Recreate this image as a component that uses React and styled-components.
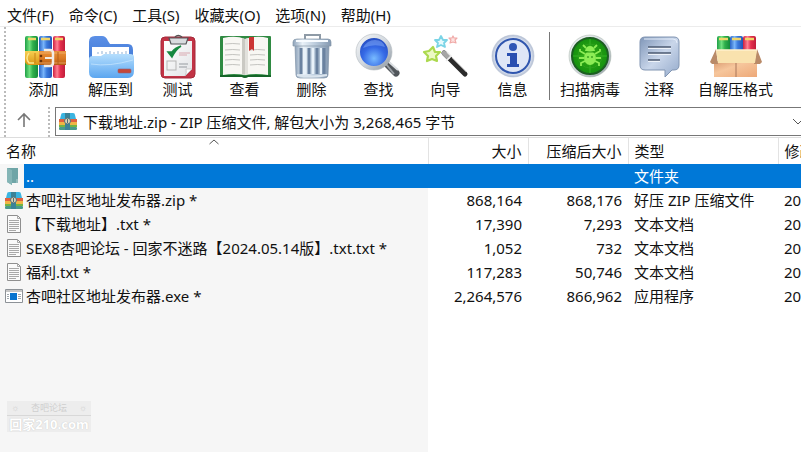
import React, { useState } from 'react'
import styled, { createGlobalStyle, css } from 'styled-components'

const GlobalStyle = createGlobalStyle`
  * {
    box-sizing: border-box;
  }

  body {
    margin: 0;
    background: #fff;
    color: #111;
    overflow: hidden;
  }

  body, button, select {
    font-family: 'Noto Sans', 'Noto Sans CJK SC', sans-serif;
    font-size: 15px;
    line-height: 20px;
  }
`

const Defs = () => (
  <defs>
    <linearGradient id="green"><stop offset="0" stopColor="#1fa046" /><stop offset=".35" stopColor="#6fe07f" /><stop offset=".6" stopColor="#2fb04c" /><stop offset="1" stopColor="#128a3a" /></linearGradient>
    <linearGradient id="blue"><stop offset="0" stopColor="#2a63c4" /><stop offset=".35" stopColor="#78b4fa" /><stop offset=".6" stopColor="#3a79dc" /><stop offset="1" stopColor="#2355b8" /></linearGradient>
    <linearGradient id="red"><stop offset="0" stopColor="#cf2040" /><stop offset=".35" stopColor="#ff7f92" /><stop offset=".6" stopColor="#e5304e" /><stop offset="1" stopColor="#c01c3a" /></linearGradient>
    <linearGradient id="belt" x2="0" y2="1"><stop offset="0" stopColor="#e8923a" /><stop offset=".5" stopColor="#dd7c26" /><stop offset="1" stopColor="#b55a12" /></linearGradient>
    <linearGradient id="gold" x2="0" y2="1"><stop offset="0" stopColor="#f7cf52" /><stop offset="1" stopColor="#d99514" /></linearGradient>
    <linearGradient id="folderBack" x2="0" y2="1"><stop offset="0" stopColor="#5b8fe6" /><stop offset="1" stopColor="#3a74d2" /></linearGradient>
    <linearGradient id="folderFront" x2="0" y2="1"><stop offset="0" stopColor="#b5defd" /><stop offset="1" stopColor="#5ba6f0" /></linearGradient>
    <linearGradient id="steel"><stop offset="0" stopColor="#8ea3ba" /><stop offset=".25" stopColor="#e9f1f8" /><stop offset=".6" stopColor="#b9cadb" /><stop offset="1" stopColor="#8398b0" /></linearGradient>
    <linearGradient id="paper" x2="1" y2="1"><stop offset="0" stopColor="#fff" /><stop offset="1" stopColor="#e2e4e6" /></linearGradient>
    <radialGradient id="lens" cx=".5" cy=".7" r=".7"><stop offset="0" stopColor="#78bbff" /><stop offset=".5" stopColor="#3569e6" /><stop offset="1" stopColor="#2348ba" /></radialGradient>
    <linearGradient id="rim" x2="1" y2="1"><stop offset="0" stopColor="#f2f4f6" /><stop offset=".5" stopColor="#d2d8de" /><stop offset="1" stopColor="#949da6" /></linearGradient>
    <radialGradient id="infoRim"><stop offset=".8" stopColor="#e9effb" /><stop offset="1" stopColor="#b3bed2" /></radialGradient>
    <radialGradient id="bugGreen"><stop offset="0" stopColor="#35ad12" /><stop offset="1" stopColor="#149010" /></radialGradient>
    <linearGradient id="bubble" x2="1" y2="1"><stop offset="0" stopColor="#7f96b8" /><stop offset=".5" stopColor="#c9d6ea" /><stop offset="1" stopColor="#93a9ca" /></linearGradient>
    <linearGradient id="carton" x2="1" y2="1"><stop offset="0" stopColor="#d99a70" /><stop offset=".4" stopColor="#f6c69c" /><stop offset="1" stopColor="#eda878" /></linearGradient>
  </defs>
)

const AddIcon = () => (
  <>
    <rect x="8" y="3" width="13" height="42" rx="2" fill="url(#green)" />
    <rect x="22" y="3" width="13" height="42" rx="2" fill="url(#blue)" />
    <rect x="36" y="3" width="12" height="42" rx="2" fill="url(#red)" />
    <path d="M11 6h8M24 6h9M38 6h8" stroke="#f0d66a" strokeWidth="2.5" />
    <path d="M8 18h16v14H12q-3 0-4-3z" fill="url(#gold)" />
    <path d="M12 20q-4 5 0 10h5" stroke="#fbe68c" strokeWidth="1.5" fill="none" />
    <path d="M18 20v10" stroke="#c98314" />
    <rect x="22" y="18" width="27" height="14" fill="url(#belt)" />
    <path d="M22 20h27M22 30h27" stroke="#f5b878" strokeWidth=".7" />
    <path d="M27 17h6q3 0 3 3v10q0 3-3 3h-6" fill="none" stroke="#f1ece6" strokeWidth="2.5" />
    <path d="M28 25h8" stroke="#f1ece6" strokeWidth="2" />
    <circle cx="24" cy="23" r="1.300" fill="#6b3208" />
    <circle cx="24" cy="28" r="1.300" fill="#6b3208" />
    <path d="M41 19v12" stroke="#b5601b" />
  </>
)

const ExtractIcon = () => (
  <>
    <path d="M5 9q0-6 6-6h7q4 0 6 5l2 3h18q5 0 5 6v18H5z" fill="url(#folderBack)" />
    <path d="M8 14h37v14H8z" fill="#fff" />
    <path d="M14 21v-2M18 21v-3M22 21v-2M26 21v-3M30 21v-2M34 21v-3M38 21v-2M42 21v-3" stroke="#8fb1d6" />
    <path d="M5 26q0-3 4-3h8l3-2h26q4 0 4 3v14q0 7-6 7H11q-6 0-6-6z" fill="url(#folderFront)" />
    <path d="M7 31q18 3 42-4" stroke="#d3edff" strokeWidth="1" fill="none" opacity=".6" />
    <rect x="34" y="36" width="13" height="4" rx="1" fill="#c4473a" stroke="#8e6277" strokeWidth=".6" />
  </>
)

const TestIcon = () => (
  <>
    <rect x="10" y="4" width="34" height="41" rx="4" fill="#c23345" stroke="#a52a3a" />
    <path d="M13 8h28v28l-7 7H13z" fill="url(#paper)" />
    <path d="M41 36l-7 7q2-3 1-7z" fill="#fff" stroke="#bbb" strokeWidth=".7" />
    <path d="M18 5h19l-2 6H20z" fill="#d9dcdf" stroke="#54565a" strokeWidth="1.200" />
    <path d="M24 4q3-3 7 0" fill="none" stroke="#555" strokeWidth="1.500" />
    <rect x="16" y="28" width="9" height="9" fill="none" stroke="#b5b5b5" />
    <path d="M17 19l4 5q4-8 9-11-6 2-9 6z" fill="#168940" stroke="#168940" strokeWidth="1.500" />
    <path d="M28 20h11M28 22h8" stroke="#d9a9b0" />
    <path d="M28 31h9M28 34h8" stroke="#969ba0" />
  </>
)

const ViewIcon = () => (
  <>
    <rect x="2" y="3" width="51" height="41" rx="1" fill="#2f8a42" />
    <path d="M5 5q13-3 22 1v36q-11-2-22 0z" fill="#f8f7f3" />
    <path d="M27 6q12-4 23-1v37q-12-2-23 0z" fill="#f8f7f3" />
    <path d="M24 5l3 1v36l-3-1z" fill="#cac9c3" />
    <path d="M27 6l3-1v36l-3 1z" fill="#e2e1dc" />
    <path d="M7 11q8-1 15 0M7 17q8-1 15 0M7 22q8-1 15 0M7 27q8-1 15 0M7 32q8-1 15 0M32 17q8-1 15 0M32 22q8-1 15 0M32 27q8-1 15 0M32 32q8-1 15 0" stroke="#c4c4c0" fill="none" />
    <path d="M31 4h5v14l-2-2-3 2z" fill="#cb3534" />
    <path d="M2 43h22q3 2 6 0h23" stroke="#156528" strokeWidth="2" fill="none" />
  </>
)

const DeleteIcon = () => (
  <>
    <path d="M20 7V2h15v5" fill="none" stroke="#8e9aa6" strokeWidth="2" />
    <path d="M10 12h34l-1 30q0 3-4 3H15q-4 0-4-3z" fill="url(#steel)" stroke="#7f92a6" strokeWidth=".7" />
    <path d="M16 15v26M24 15v26M32 15v26M39 15v26" stroke="#6a82a0" strokeWidth="3" />
    <path d="M20 15v26M28 15v26M36 15v26" stroke="#e8f2fa" strokeWidth="2" />
    <path d="M8 9q0-3 4-3h31q3 0 3 3v4H8z" fill="url(#steel)" stroke="#8799ab" strokeWidth=".7" />
    <path d="M11 8h32" stroke="#f7fbff" strokeWidth="2" />
    <path d="M12 42q15 3 30 0" fill="none" stroke="#dbe5ee" strokeWidth="2" />
  </>
)

const FindIcon = () => (
  <>
    <path d="M35 31l9 9" stroke="#51565b" strokeWidth="7" strokeLinecap="round" />
    <path d="M34 31l8 10" stroke="#999fa5" strokeWidth="2" />
    <path d="M37 29l9 8" stroke="#dde1e4" strokeWidth="2" />
    <circle cx="22" cy="19" r="16" fill="url(#lens)" />
    <circle cx="22" cy="19" r="16" fill="none" stroke="url(#rim)" strokeWidth="4" />
    <circle cx="22" cy="19" r="18" fill="none" stroke="#b4bac0" strokeWidth=".6" />
    <path d="M11 15q4-8 12-8t10 7q-11-4-22 1z" fill="#8eb6ff" opacity=".45" />
  </>
)

const WizardIcon = () => (
  <>
    <path d="M25 20l21 21" stroke="#2b2b2b" strokeWidth="5" strokeLinecap="round" />
    <path d="M25 20l4 4" stroke="#a5a5a5" strokeWidth="5" strokeLinecap="round" />
    <path d="M28 19l4 4-5 5" stroke="#ededed" strokeWidth="1.500" fill="none" />
    <path d="M33 25l14 14" stroke="#8d8d8d" strokeWidth="1" />
    <path d="M22 3l2 4 4 0-3 3 1 4-4-2-4 2 1-4-3-3 4 0z" fill="#e5fafd" stroke="#7bd4e6" strokeWidth="1.800" strokeLinejoin="round" />
    <path d="M34 3l1 2 3 0-2 2 1 3-3-1-3 1 1-3-2-2 3 0z" fill="#fde3e1" stroke="#f0aaa8" strokeWidth="1.200" strokeLinejoin="round" />
    <path d="M14 14l2 5 5 0-4 4 1 5-5-2-5 2 1-5-4-4 5-1z" fill="#ecf9c4" stroke="#acd94e" strokeWidth="2.200" strokeLinejoin="round" />
  </>
)

const InfoIcon = () => (
  <>
    <circle cx="27" cy="23" r="21" fill="url(#infoRim)" stroke="#b7c1d3" strokeWidth=".6" />
    <circle cx="27" cy="23" r="17" fill="#dfe6f6" stroke="#3056ae" strokeWidth="2" />
    <circle cx="27" cy="14" r="4" fill="#2f55b5" />
    <path d="M21 20h10v11h2v3H21v-3h3v-8h-3z" fill="#2a4fb0" />
  </>
)

const ScanIcon = () => (
  <>
    <circle cx="27" cy="23" r="21" fill="url(#rim)" stroke="#a4b4a7" strokeWidth=".5" />
    <circle cx="27" cy="23" r="18" fill="url(#bugGreen)" stroke="#1d5f22" strokeWidth="2" />
    <path d="M27 6v34M10 23h34" stroke="#45c935" opacity=".6" />
    <circle cx="27" cy="23" r="12" fill="none" stroke="#32a323" opacity=".7" />
    <path d="M23 15l-3-3M31 15l3-3M22 21l-5-3v-2M32 21l5-3v-2M21 25h-5M33 25h5M22 28l-4 2v3M32 28l4 2v3" stroke="#8cec55" strokeWidth="1.800" fill="none" />
    <ellipse cx="27" cy="25" rx="6" ry="7" fill="#8cec55" />
    <path d="M22 18q1-5 5-5t5 5z" fill="#8cec55" />
    <path d="M22 19h10" stroke="#2b9a19" />
    <circle cx="25" cy="24" r="1" fill="#3ca524" /><circle cx="29" cy="24" r="1" fill="#3ca524" />
  </>
)

const CommentIcon = () => (
  <>
    <path d="M13 4h29q5 0 5 5v23q0 5-5 5h-2l-7 7v-7H13q-5 0-5-5V9q0-5 5-5z" fill="url(#bubble)" stroke="#8195b2" />
    <path d="M12 6h29q4 0 4 4" stroke="#e5eefb" fill="none" />
    <path d="M16 15h23M16 21h23M16 28h12" stroke="#eef3fa" strokeWidth="2" />
    <path d="M16 14h23M16 20h23M16 27h12" stroke="#4b5a72" strokeWidth="1.500" />
  </>
)

const SfxIcon = () => (
  <>
    <rect x="8" y="3" width="13" height="16" rx="2" fill="url(#green)" />
    <rect x="21" y="3" width="13" height="16" rx="2" fill="url(#blue)" />
    <rect x="34" y="3" width="13" height="16" rx="2" fill="url(#red)" />
    <path d="M10 6h9M23 6h9M36 6h9" stroke="#f0d66a" strokeWidth="2.500" />
    <path d="M5 28h43v16H5z" fill="url(#carton)" />
    <path d="M7 16l-6 13 2 2h6zM48 16l5 13-2 2h-6z" fill="#b98a68" />
    <path d="M7 17h41l-2 13H9z" fill="#f9e2ae" />
    <path d="M7 17h41" stroke="#fff0cc" strokeWidth="1.500" />
    <path d="M27 30v14" stroke="#a9775a" />
  </>
)

const ZipIcon = () => (
  <svg width="18" height="17" viewBox="0 0 18 17" aria-hidden="true">
    <path d="M2 2q0-2 2-2h10q2 0 2 2l1 4H1z" fill="#3bb4e0" />
    <rect x="0" y="6" width="18" height="3" fill="#e0603f" />
    <rect x="0" y="9" width="18" height="3" fill="#f0b545" />
    <rect x="0" y="12" width="18" height="2" fill="#72b444" />
    <rect x="0" y="14" width="18" height="3" rx="1" fill="#4a9a8c" />
    <rect x="6" y="0" width="5" height="17" fill="#3a8398" />
    <circle cx="8.500" cy="8" r="3" fill="#ddd3b4" stroke="#53727b" />
    <path d="M8.500 6v4" stroke="#4c6e7b" />
  </svg>
)

const TextIcon = () => (
  <svg width="18" height="18" viewBox="0 0 18 18" aria-hidden="true">
    <path d="M2.500.5h10l3 3v14h-13z" fill="#fafafa" stroke="#8f8f8f" />
    <path d="M12.500.5v3h3M4 5.500h10M4 7.500h10M4 9.500h10M4 11.500h10M4 13.500h10M4 15.500h7" stroke="#a8a8a8" fill="none" />
  </svg>
)

const ExeIcon = () => (
  <svg width="18" height="14" viewBox="0 0 18 14" aria-hidden="true">
    <path d="M.5.5h17v13H.5z" fill="#fff" stroke="#8d9297" />
    <path d="M1 2h16" stroke="#c6c6c6" strokeWidth="2" />
    <path d="M5 4h7v7H5z" fill="#0874cf" />
    <path d="M2 5.500h2M2 7.500h2M2 9.500h2M13 5.500h3M13 7.500h3M13 9.500h3" stroke="#a0a8ad" />
  </svg>
)

const FolderIcon = () => (
  <svg width="18" height="18" viewBox="0 0 18 18" aria-hidden="true">
    <path d="M2 1h11v15H7v2l-5-3z" fill="#6fa5a7" />
    <path d="M2 1l5 2v15l-5-3z" fill="#85b5b6" />
    <path d="M12 12v4" stroke="#b6d0d0" />
  </svg>
)

const menus = ['文件(F)', '命令(C)', '工具(S)', '收藏夹(O)', '选项(N)', '帮助(H)']

const tools = [
  { label: '添加', icon: AddIcon },
  { label: '解压到', icon: ExtractIcon },
  { label: '测试', icon: TestIcon },
  { label: '查看', icon: ViewIcon },
  { label: '删除', icon: DeleteIcon },
  { label: '查找', icon: FindIcon },
  { label: '向导', icon: WizardIcon },
  { label: '信息', icon: InfoIcon },
]

const extraTools = [
  { label: '扫描病毒', icon: ScanIcon },
  { label: '注释', icon: CommentIcon },
  { label: '自解压格式', icon: SfxIcon },
]

const files = [
  { name: '..', type: '文件夹', icon: FolderIcon },
  { name: '杏吧社区地址发布器.zip *', size: '868,164', packed: '868,176', type: '好压 ZIP 压缩文件', date: '20', icon: ZipIcon },
  { name: '【下载地址】.txt *', size: '17,390', packed: '7,293', type: '文本文档', date: '20', icon: TextIcon },
  { name: 'SEX8杏吧论坛 - 回家不迷路【2024.05.14版】.txt.txt *', size: '1,052', packed: '732', type: '文本文档', date: '20', icon: TextIcon },
  { name: '福利.txt *', size: '117,283', packed: '50,746', type: '文本文档', date: '20', icon: TextIcon },
  { name: '杏吧社区地址发布器.exe *', size: '2,264,576', packed: '866,962', type: '应用程序', date: '20', icon: ExeIcon },
]

const Tool = ({ label, icon: Icon, fit }) => (
  <ToolButton type="button" $fit={fit}>
    <svg width="54" height="46" viewBox="0 0 54 46" aria-hidden="true"><Defs /><Icon /></svg>
    {label}
  </ToolButton>
)

const App = () => {
  const [selected, setSelected] = useState(0)

  return (
    <Window>
      <GlobalStyle />
      <MenuBar>
        {menus.map((x) => <MenuButton type="button" key={x}>{x}</MenuButton>)}
      </MenuBar>
      <Toolbar>
        <Grip />
        {tools.map((x) => <Tool key={x.label} {...x} />)}
        <Separator />
        {extraTools.map((x) => <Tool key={x.label} {...x} fit />)}
      </Toolbar>
      <AddressRow>
        <Grip />
        <UpButton type="button" aria-label="上一级">
          <svg width="16" height="16" viewBox="0 0 16 16"><path d="M8 15V2M2 8l6-6 6 6" fill="none" stroke="#777" strokeWidth="1.6" /></svg>
        </UpButton>
        <Grip />
        <Address>
          <ZipIcon />
          <AddressSelect aria-label="地址">
            <option>下载地址.zip - ZIP 压缩文件, 解包大小为 3,268,465 字节</option>
          </AddressSelect>
          <svg width="12" height="8" viewBox="0 0 12 8"><path d="M1 1l5 5 5-5" fill="none" stroke="#555" /></svg>
        </Address>
      </AddressRow>
      <FilePane>
        <FileTable>
          <colgroup>
            <Column $width={428} />
            <Column $width={100} />
            <Column $width={100} />
            <Column $width={150} />
            <Column />
          </colgroup>
          <thead>
            <tr>
              <HeadCell>
                名称
                <SortMark width="11" height="6" viewBox="0 0 11 6"><path d="M1 5l4.500-4 4.500 4" fill="none" stroke="#555" /></SortMark>
              </HeadCell>
              <HeadCell $right>大小</HeadCell>
              <HeadCell $right>压缩后大小</HeadCell>
              <HeadCell>类型</HeadCell>
              <HeadCell>修改</HeadCell>
            </tr>
          </thead>
          <tbody>
            {files.map((file, i) => {
              const { name, size, packed, type, date, icon: Icon } = file
              return (
                <FileRow key={name} $selected={selected === i} onClick={() => setSelected(i)}>
                  <NameCell>
                    <NameInner>
                      <IconSlot><Icon /></IconSlot>
                      <FileName $selected={selected === i}>{name}</FileName>
                    </NameInner>
                  </NameCell>
                  <Cell $right>{size}</Cell>
                  <Cell $right>{packed}</Cell>
                  <Cell>{type}</Cell>
                  <Cell>{date}</Cell>
                </FileRow>
              )
            })}
          </tbody>
        </FileTable>
        <Watermark>
          <WatermarkTop><span>☼</span>杏吧论坛<span>☼</span></WatermarkTop>
          <WatermarkUrl>回家210.com</WatermarkUrl>
        </Watermark>
      </FilePane>
    </Window>
  )
}

const Window = styled.div`
  display: flex;
  flex-direction: column;
  min-height: 100vh;
  overflow: hidden;
`

const plainButton = css`
  border: 0;
  padding: 0;
  background: none;
  color: inherit;
  white-space: nowrap;
`

const MenuBar = styled.nav`
  display: flex;
  gap: 15px;
  height: 27px;
  padding: 5px 7px 0;
  border-bottom: 1px solid #ececec;
`

const MenuButton = styled.button`
  ${plainButton}
  height: 20px;
`

const Toolbar = styled.div`
  display: flex;
  height: 80px;
  padding-left: 4px;
`

const Grip = styled.span`
  flex: none;
  width: 2px;
  margin-right: 4px;
  background: repeating-linear-gradient(#bbb 0 2px, transparent 2px 4px);
`

const ToolButton = styled.button`
  ${plainButton}
  display: flex;
  flex: none;
  flex-direction: column;
  align-items: center;
  width: ${({ $fit }) => ($fit ? 'auto' : '67px')};
  padding: 6px ${({ $fit }) => ($fit ? '6px' : '0')} 0;

  svg {
    flex: none;
  }
`

const Separator = styled.span`
  flex: none;
  width: 1px;
  height: 68px;
  margin: 5px 4px 0 3px;
  background: #777;
`

const AddressRow = styled.div`
  display: flex;
  height: 31px;
  padding-left: 4px;
  border-bottom: 1px solid #ddd;
`

const UpButton = styled.button`
  ${plainButton}
  display: flex;
  align-items: center;
  justify-content: center;
  width: 28px;
  height: 26px;
  margin-right: 10px;
`

const Address = styled.div`
  display: flex;
  flex: 1;
  align-items: center;
  height: 29px;
  margin-right: -8px;
  margin-left: 1px;
  padding: 0 4px 0 3px;
  border: 1px solid #777;
`

const AddressSelect = styled.select`
  flex: 1;
  min-width: 0;
  margin: 0;
  padding: 0 0 0 6px;
  border: 0;
  outline: 0;
  appearance: none;
  background: none;
  color: inherit;
`

const FilePane = styled.main`
  position: relative;
  flex: 1;
  background: linear-gradient(#f6f6f6, #f6f6f6) no-repeat left / 428px 100%;
`

const FileTable = styled.table`
  width: 100%;
  table-layout: fixed;
  border-collapse: collapse;
`

const Column = styled.col`
  width: ${({ $width }) => ($width ? `${$width}px` : 'auto')};
`

const HeadCell = styled.th`
  position: relative;
  height: 26px;
  padding: 0 6px;
  overflow: hidden;
  background: #fff;
  border-right: 1px solid #e3e3e3;
  font-weight: 400;
  text-align: ${({ $right }) => ($right ? 'right' : 'left')};
  white-space: nowrap;

  &:last-child {
    padding-right: 0;
    border-right: 0;
  }
`

const SortMark = styled.svg`
  position: absolute;
  top: 1px;
  left: 50%;
  transform: translateX(-50%);
`

const FileRow = styled.tr`
  ${({ $selected }) => $selected && css`
    color: #fff;

    td + td {
      background: #0078d7;
    }
  `}
`

const Cell = styled.td`
  height: 24px;
  padding: 0 6px;
  overflow: hidden;
  text-align: ${({ $right }) => ($right ? 'right' : 'left')};
  white-space: nowrap;

  &:last-child {
    padding-right: 0;
  }
`

const NameCell = styled(Cell)`
  padding: 0;
`

const NameInner = styled.div`
  display: flex;
`

const IconSlot = styled.span`
  display: flex;
  flex: none;
  align-items: center;
  justify-content: flex-end;
  width: 24px;
  padding-right: 1px;
`

const FileName = styled.span`
  flex: 1;
  padding-left: 2px;
  line-height: 24px;
  background: ${({ $selected }) => ($selected ? '#0078d7' : 'none')};
`

const Watermark = styled.div`
  position: absolute;
  bottom: 20px;
  left: 7px;
  width: 84px;
  background: #ededed;
`

const WatermarkTop = styled.div`
  display: flex;
  justify-content: space-between;
  padding: 0 4px;
  border-bottom: 1px solid #d8d8d8;
  color: #cfcfcf;
  font-size: 9px;
  line-height: 14px;
`

const WatermarkUrl = styled.div`
  color: #fff;
  font-size: 13px;
  font-weight: 700;
  line-height: 16px;
  text-align: center;
  text-shadow: 0 0 1px #bbb;
  white-space: nowrap;
`

export default App
